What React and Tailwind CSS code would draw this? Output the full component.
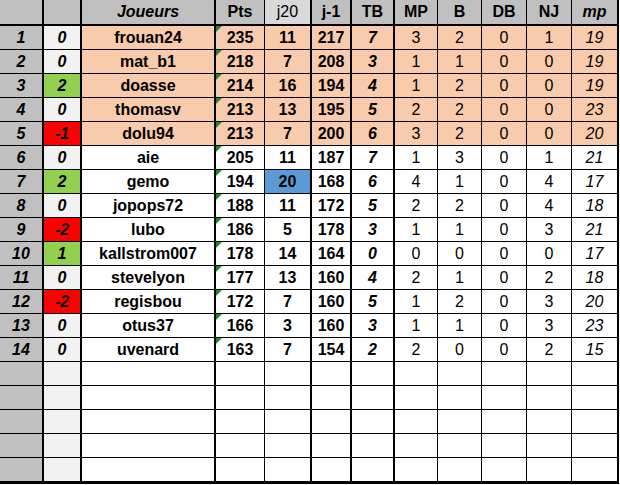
import React from "react";

const players = [
  { n: 1, d: 0, name: "frouan24", pts: 235, j20: 11, j1: 217, tb: 7, mp: 3, b: 2, db: 0, nj: 1, m: 19, top: true },
  { n: 2, d: 0, name: "mat_b1", pts: 218, j20: 7, j1: 208, tb: 3, mp: 1, b: 1, db: 0, nj: 0, m: 19, top: true },
  { n: 3, d: 2, name: "doasse", pts: 214, j20: 16, j1: 194, tb: 4, mp: 1, b: 2, db: 0, nj: 0, m: 19, top: true },
  { n: 4, d: 0, name: "thomasv", pts: 213, j20: 13, j1: 195, tb: 5, mp: 2, b: 2, db: 0, nj: 0, m: 23, top: true },
  { n: 5, d: -1, name: "dolu94", pts: 213, j20: 7, j1: 200, tb: 6, mp: 3, b: 2, db: 0, nj: 0, m: 20, top: true },
  { n: 6, d: 0, name: "aie", pts: 205, j20: 11, j1: 187, tb: 7, mp: 1, b: 3, db: 0, nj: 1, m: 21 },
  { n: 7, d: 2, name: "gemo", pts: 194, j20: 20, j1: 168, tb: 6, mp: 4, b: 1, db: 0, nj: 4, m: 17, best: true },
  { n: 8, d: 0, name: "jopops72", pts: 188, j20: 11, j1: 172, tb: 5, mp: 2, b: 2, db: 0, nj: 4, m: 18 },
  { n: 9, d: -2, name: "lubo", pts: 186, j20: 5, j1: 178, tb: 3, mp: 1, b: 1, db: 0, nj: 3, m: 21 },
  { n: 10, d: 1, name: "kallstrom007", pts: 178, j20: 14, j1: 164, tb: 0, mp: 0, b: 0, db: 0, nj: 0, m: 17 },
  { n: 11, d: 0, name: "stevelyon", pts: 177, j20: 13, j1: 160, tb: 4, mp: 2, b: 1, db: 0, nj: 2, m: 18 },
  { n: 12, d: -2, name: "regisbou", pts: 172, j20: 7, j1: 160, tb: 5, mp: 1, b: 2, db: 0, nj: 3, m: 20 },
  { n: 13, d: 0, name: "otus37", pts: 166, j20: 3, j1: 160, tb: 3, mp: 1, b: 1, db: 0, nj: 3, m: 23 },
  { n: 14, d: 0, name: "uvenard", pts: 163, j20: 7, j1: 154, tb: 2, mp: 2, b: 0, db: 0, nj: 2, m: 15 },
];

const cell = "flex items-center justify-center border-black";

export default function App() {
  const rows = [...players, null, null, null, null, null];

  return (
    <div className="w-[620px] h-[485px] bg-white font-['Liberation_Sans',Arial,sans-serif] text-[16px] leading-none text-black">
      <div className="grid grid-cols-[44px_38px_134px_49px_47px_40px_43px_43px_44px_45px_45px_47px]">
        {/* Header */}
        <div className={`${cell} h-[26px] bg-[#c0c0c0] border-r-2 border-b-2`}></div>
        <div className={`${cell} h-[26px] bg-[#c0c0c0] border-r-2 border-b-2`}></div>
        <div className={`${cell} h-[26px] bg-[#c0c0c0] border-r-2 border-b-2 font-bold italic`}>Joueurs</div>
        <div className={`${cell} h-[26px] bg-[#c0c0c0] border-r border-b-2 font-bold`}>Pts</div>
        <div className={`${cell} h-[26px] bg-[#d9d9d9] border-r-2 border-b-2`}>j20</div>
        <div className={`${cell} h-[26px] bg-[#c0c0c0] border-r-2 border-b-2 font-bold`}>j-1</div>
        <div className={`${cell} h-[26px] bg-[#c0c0c0] border-r-2 border-b-2 font-bold`}>TB</div>
        <div className={`${cell} h-[26px] bg-[#c0c0c0] border-r border-b-2 font-bold`}>MP</div>
        <div className={`${cell} h-[26px] bg-[#c0c0c0] border-r border-b-2 font-bold`}>B</div>
        <div className={`${cell} h-[26px] bg-[#c0c0c0] border-r border-b-2 font-bold`}>DB</div>
        <div className={`${cell} h-[26px] bg-[#c0c0c0] border-r border-b-2 font-bold`}>NJ</div>
        <div className={`${cell} h-[26px] bg-[#c0c0c0] border-r-2 border-b-2 font-bold italic`}>mp</div>

        {rows.map((p, i) => {
          const last = i === rows.length - 1;
          const rb = last ? "h-[26px] border-b-[3px]" : "h-[24px] border-b";
          const bg = p && p.top ? "bg-[#f8cbad]" : "bg-white";
          let deltaBg = "bg-[#f2f2f2]";
          if (p && p.d > 0) deltaBg = "bg-[#92d050]";
          if (p && p.d < 0) deltaBg = "bg-[#ff0000]";

          return (
            <React.Fragment key={i}>
              <div className={`${cell} ${rb} bg-[#c0c0c0] border-r-2 font-bold italic`}>{p && p.n}</div>
              <div className={`${cell} ${rb} ${deltaBg} border-r-2 font-bold italic`}>{p && p.d}</div>
              <div className={`${cell} ${rb} ${bg} border-r-2 font-bold`}>{p && p.name}</div>
              <div className={`${cell} ${rb} ${bg} border-r font-bold relative`}>
                {p && (
                  <span className="absolute left-0 top-0 w-0 h-0 border-t-[6px] border-r-[6px] border-t-[#1f8a1f] border-r-transparent"></span>
                )}
                {p && p.pts}
              </div>
              <div className={`${cell} ${rb} ${p && p.best ? "bg-[#5b9bd5]" : bg} border-r-2 font-bold`}>{p && p.j20}</div>
              <div className={`${cell} ${rb} ${bg} border-r-2 font-bold`}>{p && p.j1}</div>
              <div className={`${cell} ${rb} ${bg} border-r-2 font-bold italic`}>{p && p.tb}</div>
              <div className={`${cell} ${rb} ${bg} border-r`}>{p && p.mp}</div>
              <div className={`${cell} ${rb} ${bg} border-r`}>{p && p.b}</div>
              <div className={`${cell} ${rb} ${bg} border-r`}>{p && p.db}</div>
              <div className={`${cell} ${rb} ${bg} border-r`}>{p && p.nj}</div>
              <div className={`${cell} ${rb} ${bg} border-r-2 italic`}>{p && p.m}</div>
            </React.Fragment>
          );
        })}
      </div>
    </div>
  );
}
